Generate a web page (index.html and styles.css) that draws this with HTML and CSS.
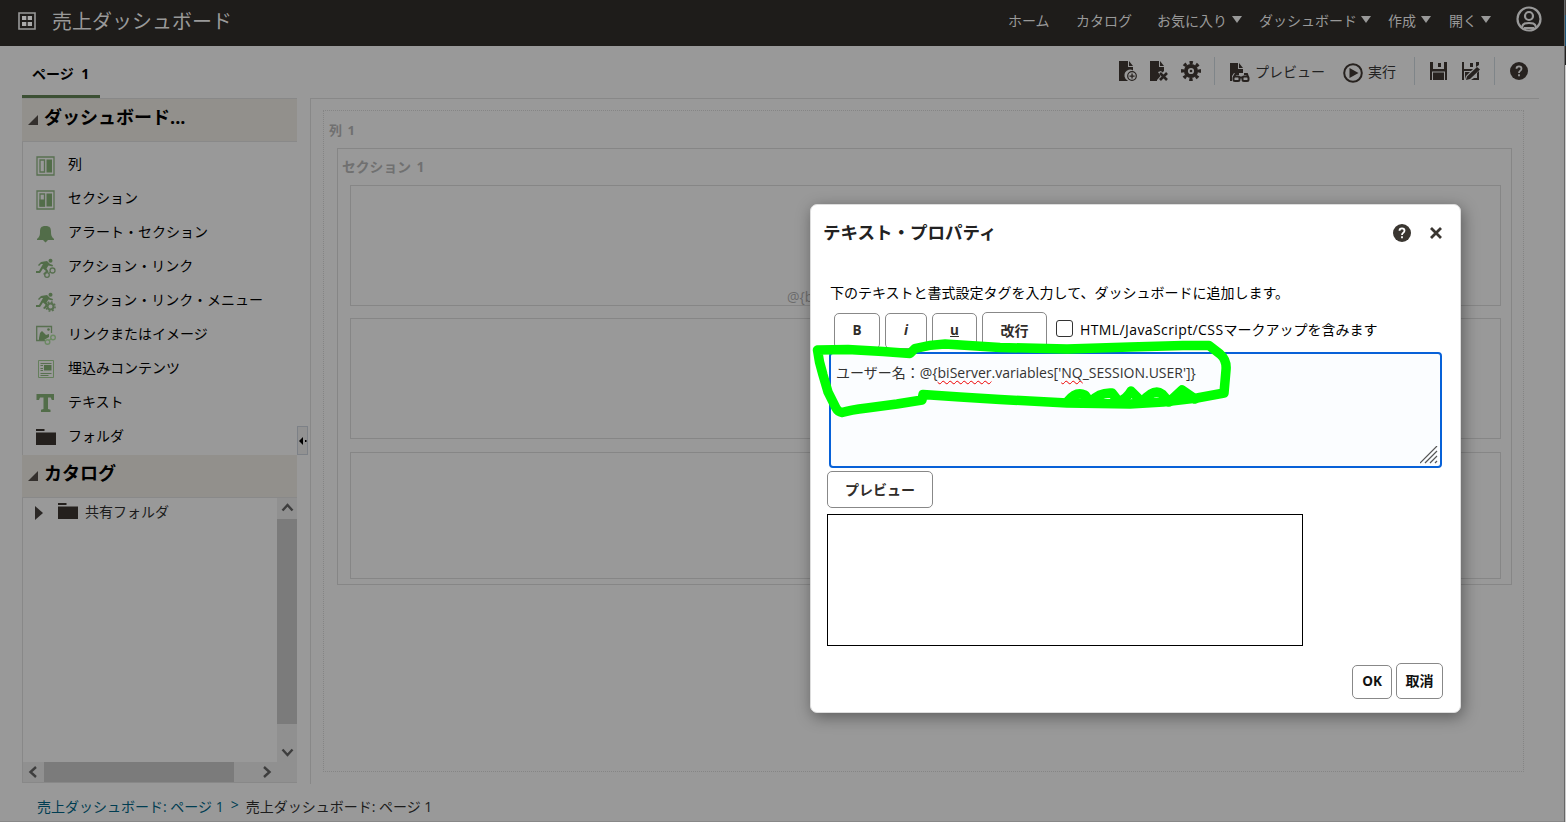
FILE: index.html
```html
<!DOCTYPE html>
<html lang="ja">
  <head>
    <meta charset="UTF-8" />
    <meta name="viewport" content="width=device-width, initial-scale=1.0" />
    <title>売上ダッシュボード</title>
    <link rel="stylesheet" href="styles.css">
  </head>
  <body>
    <div class="page">
      <header class="header">
        <svg class="logo" width="18" height="18" viewBox="0 0 18 18"><path d="M1 1h16v16H1z" fill="none" stroke="#999" stroke-width="1.600"/><path d="M4 4h4.300v4H4zM9.700 4H14v4H9.700zM4 10h4.300v4H4zM9.700 10H14v4H9.700z" fill="#aaa"/></svg>
        <h1 class="app-title">売上ダッシュボード</h1>
        <nav class="nav">
          <a class="n-home">ホーム</a>
          <a class="n-catalog">カタログ</a>
          <a class="n-fav">お気に入り<i class="caret"></i></a>
          <a class="n-dash">ダッシュボード<i class="caret"></i></a>
          <a class="n-new">作成<i class="caret"></i></a>
          <a class="n-open">開く<i class="caret"></i></a>
        </nav>
        <svg class="user" width="26" height="26" viewBox="0 0 26 26" fill="none" stroke="#999" stroke-width="2.200"><circle cx="13" cy="13" r="11.500"/><circle cx="13" cy="10" r="4"/><path d="M6 21c1-4 4-4 7-4s6 0 7 4M8 22h10"/></svg>
      </header>

      <div class="topbar">
        <div class="tab">ページ 1</div>
        <div class="tools">
          <svg class="t-add" width="20" height="22" viewBox="0 0 20 22"><path d="M0 1h9v6h5v3.500a5.500 5.500 0 0 0-6 9.500l1 1H0zM10 1l4 5h-4z"/><circle cx="13" cy="16" r="4.300" fill="none" stroke="#27221f" stroke-width="1.200"/><path d="M12.400 13.500h1.300v1.900h1.900v1.300h-1.900v1.900h-1.300v-1.900h-1.900v-1.300h1.900z"/></svg>
          <svg class="t-del" width="20" height="22" viewBox="0 0 20 22"><path d="M0 1h9v6h5v4l-1.500 1.500L11 11l-3 1 2.500 4L7 20v1H0zM10 1l4 5h-4z"/><path d="M10 13l7 7M17 13l-7 7" stroke="#27221f" stroke-width="2.600"/></svg>
          <svg class="t-gear" width="20" height="20" viewBox="0 0 20 20"><g fill="none" stroke="#27221f"><circle cx="10" cy="10" r="5.100" stroke-width="4"/><circle cx="10" cy="10" r="8.400" stroke-width="3.200" stroke-dasharray="3.300 3.297" transform="rotate(-11.500 10 10)"/></g><circle cx="10" cy="10" r="1.300"/></svg>
          <i class="sep"></i>
          <svg class="t-prev" width="20" height="21" viewBox="0 0 20 21"><path d="M0 1h8v6h5v4H4l-2 3v5H0zM9 1l4 5H9z"/><g fill="none" stroke="#27221f" stroke-width="2"><path d="M4 15l1.500-3H9M18 15l-1-3h-3M9 15.500h3"/><rect x="3.500" y="14.500" width="6" height="4.500" rx="1.500"/><rect x="12.500" y="14.500" width="6" height="4.500" rx="1.500"/></g></svg>
          <span class="tx-prev">プレビュー</span>
          <svg class="t-run" width="20" height="20" viewBox="0 0 20 20"><circle cx="10" cy="10" r="8.800" fill="none" stroke="#27221f" stroke-width="2"/><path d="M6.500 5l9 5-9 5z"/></svg>
          <span class="tx-run">実行</span>
          <i class="sep"></i>
          <svg class="t-save" width="17" height="18" viewBox="0 0 17 18"><path d="M0 0h3v7h11V0h3v18h-2V9.500H2V18H0zM3 10.500h11V18H3zM8 1h3v4H8z"/></svg>
          <svg class="t-saveas" width="19" height="18" viewBox="0 0 19 18"><path d="M0 0h2v7h9l-2 2H2v9H0zM8 1h3v4H8zM14 0h3v3l-3 2zM17 9v9H9l3-2h3v-5zM3 10h5l-4 4-1 3zM4 18l1-3.500L15 5l3 2.500L8 17z"/></svg>
          <i class="sep"></i>
          <svg class="t-help" width="18" height="18" viewBox="0 0 18 18"><circle cx="9" cy="9" r="9"/><path d="M6.500 6.800Q6.500 4.400 9 4.400t2.500 2.400Q11.500 8 10 8.900q-1 .6-1 2M9 12.300v2" fill="none" stroke="#999" stroke-width="1.800"/></svg>
        </div>
      </div>

      <main class="main">
        <aside class="sidebar">
          <h2 class="panel-head"><i class="open"></i><span class="h-dash">ダッシュボード...</span></h2>
          <ul class="items">
            <li><svg width="20" height="20" viewBox="0 0 20 20"><path d="M1 1h17v18H1zM4 4h4.500v12H4z" fill="none" stroke="#587050" stroke-width="1.300"/><path d="M10.500 3.500H16v13h-5.500z"/></svg><span>列</span></li>
            <li><svg width="20" height="20" viewBox="0 0 20 20"><path d="M1 1h17v18H1zM4 4h4.500v12H4z" fill="none" stroke="#587050" stroke-width="1.300"/><path d="M10.500 3.500H16v13h-5.500zM3.500 9.500H9v7H3.500z"/></svg><span>セクション</span></li>
            <li><svg width="20" height="20" viewBox="0 0 20 20"><path d="M9.500 2c4.500 0 5.500 2 5.500 6 0 4 1 5 3 7v1h-6l-2.500 2.500L7 16H1v-1c2-2 3-3 3-7 0-4 1-6 5.500-6z"/></svg><span>アラート・セクション</span></li>
            <li><svg width="20" height="20" viewBox="0 0 20 20"><use href="#runner"/><circle cx="16.500" cy="12.500" r="2.500" fill="none" stroke="#587050" stroke-width="1.300"/><circle cx="11" cy="17" r="2.300" fill="none" stroke="#587050" stroke-width="1.300"/><path d="M12.500 15.500l2.500-2" stroke="#587050"/></svg><span>アクション・リンク</span></li>
            <li><svg width="20" height="20" viewBox="0 0 20 20"><use href="#runner"/><circle cx="14.500" cy="14.500" r="3" fill="none" stroke="#587050" stroke-width="2"/><circle cx="14.500" cy="14.500" r="4.600" fill="none" stroke="#587050" stroke-width="1.500" stroke-dasharray="1.800 1.800"/></svg><span>アクション・リンク・メニュー</span></li>
            <li><svg width="20" height="20" viewBox="0 0 20 20"><path d="M15.500 8V1.500H.7v14H9" fill="none" stroke="#587050" stroke-width="1.300"/><path d="M3 13l1-5 2-2 4 4 3-1v3l-5 3H3z"/><circle cx="12.500" cy="4.500" r="1.300"/><g fill="none" stroke="#6d8a64" stroke-width="1.400"><circle cx="17" cy="12.500" r="2.300"/><circle cx="11.500" cy="17" r="2.300"/><path d="M13 15.500l2.500-2"/></g></svg><span>リンクまたはイメージ</span></li>
            <li><svg width="20" height="20" viewBox="0 0 20 20"><path d="M2.500 1.500h15v17h-15z" fill="none" stroke="#647f5b"/><path d="M4.500 4.500h11M4.500 6.500H7M4.500 9.500H7M4.500 11.500H7M4.500 14.500h11M4.500 16.500h8" stroke="#587050"/><path d="M8 6h7.500v5.500H8z"/></svg><span>埋込みコンテンツ</span></li>
            <li><svg width="20" height="20" viewBox="0 0 20 20"><path d="M.5 1h17.500v6h-2.200l-1-2.500H12V16l2.500.8V19H5v-2.200L7.500 16V4.500H4L3 7H.5z"/></svg><span>テキスト</span></li>
            <li><svg width="20" height="20" viewBox="0 0 20 20" class="folder"><path d="M0 2h8.500v2H0zM0 5.500h20V18H0z"/></svg><span>フォルダ</span></li>
          </ul>
          <h2 class="panel-head"><i class="open"></i><span class="h-cat">カタログ</span></h2>
          <div class="catalog">
            <div class="tree">
              <i class="closed"></i>
              <svg width="20" height="16" viewBox="0 0 20 16" class="folder"><path d="M0 0h8.500v2H0zM0 3.500h20V16H0z"/></svg>
              <span class="shared">共有フォルダ</span>
            </div>
            <div class="vscroll">
              <svg width="20" height="21" viewBox="0 0 20 21"><path d="M5.500 12.500l5-5.500 5 5.500"/></svg>
              <div class="vthumb"></div>
              <svg width="20" height="20" viewBox="0 0 20 20"><path d="M5.500 7.500l5 5.500 5-5.500"/></svg>
            </div>
            <div class="hscroll">
              <svg width="21" height="20" viewBox="0 0 21 20"><path d="M13 5l-5.500 5 5.500 5"/></svg>
              <div class="hthumb"></div>
              <svg width="20" height="20" viewBox="0 0 20 20"><path d="M7 5l5.500 5L7 15"/></svg>
            </div>
          </div>
        </aside>

        <div class="splitter"><div class="handle"><svg width="9" height="8" viewBox="0 0 9 8"><path d="M5 0v8L1 4zM7 3h1.500v2H7z"/></svg></div></div>

        <section class="canvas">
          <div class="column">
            <h3>列 1</h3>
            <div class="section">
              <h3 class="h-sec">セクション 1</h3>
              <div class="box"><span>@{b</span></div>
              <div class="box"></div>
              <div class="box last"></div>
            </div>
          </div>
        </section>
      </main>

      <footer class="crumbs">
        <a class="c-link">売上ダッシュボード: ページ 1</a><a class="gt">&gt;</a><span class="c-now">売上ダッシュボード: ページ 1</span>
      </footer>
    </div>
    <div class="edge"><i class="edge-top"></i><i class="edge-blue"></i><i class="edge-mid"></i></div>

    <div class="dialog">
      <div class="dialog-head">
        <h2>テキスト・プロパティ</h2>
        <svg width="18" height="18" viewBox="0 0 18 18"><circle cx="9" cy="9" r="9" fill="#3a3631"/><path d="M6.500 6.800Q6.500 4.400 9 4.400t2.500 2.400Q11.500 8 10 8.900q-1 .6-1 2M9 12.300v2" fill="none" stroke="#fff" stroke-width="1.800"/></svg>
        <svg class="close" width="12" height="12" viewBox="0 0 12 12"><path d="M1 1l10 10M11 1L1 11" stroke="#3a3631" stroke-width="2.800"/></svg>
      </div>
      <p class="lead">下のテキストと書式設定タグを入力して、ダッシュボードに追加します。</p>
      <div class="format">
        <button class="b">B</button>
        <button class="i">i</button>
        <button class="u">u</button>
        <button class="br">改行</button>
        <i class="check"></i>
        <label><span class="latin">HTML/JavaScript/CSS</span>マークアップを含みます</label>
      </div>
      <div class="textarea">
        <span class="typed">ユーザー名：@{<u>biServer</u>.variables['<u>NQ</u>_SESSION.USER']}</span>
        <svg class="grip" width="18" height="18" viewBox="0 0 18 18"><path d="M0 17L17 0M5 17L17 5M10 17l7-7M15 17l2-2" stroke="#555" stroke-width="1.200"/></svg>
      </div>
      <button class="preview-btn">プレビュー</button>
      <div class="preview"></div>
      <div class="actions">
        <button class="ok">OK</button>
        <button class="cancel">取消</button>
      </div>
    </div>

    <!-- hand drawn marker -->
    <svg class="marker" width="430" height="80" viewBox="808 338 430 80">
      <path d="M817.500 350L848 349.500 883 351.500 910 353.500 915 348.500Q930 344.500 945 344L1000 347.500 1067 349 1130 347 1183 345.500H1209L1220 354Q1227 360 1226 370L1224 393 1197 398 1163 402 1130 404 1067 403 1000 399.500 960 397 923 394.500 922 400 897 404 867 408Q850 410 842 412.500 838 412 836 408L828 392 823 375 819.500 362Z"/>
      <path d="M1068 401Q1076 391 1085 395L1090 402Q1100 392 1112 393L1119 402Q1128 397 1131 391L1142 402Q1154 388 1162 394L1169 402 1182 390 1195 399"/>
    </svg>

    <svg width="0" height="0" class="defs">
      <defs><g id="runner"><circle cx="14.500" cy="2.700" r="2"/><path d="M5 4l6-1 3 3 3 1-.5 1.500-4-1-2 3 2 3-4 3.500-1.500-1 3-3-3-2.500L4 15H0v-2h3l4-7H5L3 8 2 7z"/></g></defs>
    </svg>
  </body>
</html>
```
FILE: styles.css
```css
body {
  margin: 0;
  width: 1566px;
  height: 822px;
  overflow: hidden;
  display: flex;
  position: relative;
  background: #999;
  color: #000;
  font-family: "Open Sans", "Noto Sans CJK JP", sans-serif;
  font-size: 14px;
  white-space: nowrap;
}

* {
  box-sizing: border-box;
}

h1, h2, h3, p, ul {
  margin: 0;
  padding: 0;
  list-style: none;
}

svg {
  display: block;
  flex: none;
}

.page {
  width: 1564px;
  height: 822px;
  border-bottom: 1px solid #888;
}

/* header */
.header {
  height: 46px;
  display: flex;
  align-items: center;
  padding: 0 22px 4px 18px;
  background: #1e1c1a;
  color: #999;
}

.app-title {
  margin: 2px 0 0 16px;
  font-size: 20px;
  font-weight: 400;
  line-height: 40px;
}

.nav {
  display: flex;
  margin: -2px 0 0 auto;
}

.nav a {
  display: flex;
  align-items: center;
  justify-content: space-between;
}

.n-home { width: 68px; }
.n-catalog { width: 81px; }
.n-fav { width: 85px; margin-right: 17px; }
.n-dash { width: 112px; margin-right: 17px; }
.n-new { width: 43px; margin-right: 18px; }
.n-open { width: 42px; margin-right: 25px; }

.caret {
  margin-top: -2px;
  border: 5px solid transparent;
  border-top: 7px solid #999;
  border-bottom: 0;
}

.user {
  margin-top: -4px;
}

/* tab and toolbar */
.topbar {
  height: 52px;
  margin-left: 22px;
  display: flex;
}

.tab {
  width: 78px;
  border-bottom: 3px solid #3c5034;
  padding-left: 10px;
  font-weight: 700;
  line-height: 56px;
  word-spacing: 4px;
}

.tools {
  width: 411px;
  height: 50px;
  margin-left: 1019px;
  display: flex;
  align-items: center;
  fill: #27221f;
  color: #222;
}

.t-add { margin-right: 11px; }
.t-del { margin-right: 11px; }
.t-gear { margin-right: 13px; }
.t-prev { margin: 3px 5px 0 15px; }
.tx-prev { width: 88px; }
.t-run { margin: 4px 5px 0 0; }
.tx-run { width: 46px; }
.t-save { margin: 0 15px; }
.t-saveas { margin-right: 13px; }
.t-help { margin-left: 15px; }

.sep {
  width: 1px;
  height: 28px;
  background: #7f8589;
}

/* sidebar */
.main {
  height: 686px;
  margin-left: 22px;
  display: flex;
}

.sidebar {
  width: 275px;
  height: 685px;
  border-top: 1px solid #888;
  border-bottom: 1px solid #888;
}

.panel-head {
  height: 43px;
  padding-left: 6px;
  display: flex;
  align-items: center;
  background: #92908c;
  border-bottom: 1px solid #898989;
  font-size: 18px;
  font-weight: 700;
  line-height: 36px;
}

.panel-head span {
  margin: -6px 0 0 6px;
}

.open {
  border-left: 10px solid transparent;
  border-bottom: 10px solid #34302d;
}

.items {
  height: 313px;
  padding: 6px 0 0 13px;
  border-left: 1px solid #888;
}

.items li {
  height: 33.900px;
  display: flex;
  align-items: center;
  fill: #526d49;
}

.items svg {
  margin-top: 2px;
}

.items span {
  margin: -3px 0 0 12px;
}

.items .folder, .folder {
  fill: #24201d;
}

.catalog {
  height: 284px;
  display: grid;
  grid-template: 264px 20px / 254px 20px;
  background: #909090;
  border-left: 1px solid #888;
}

.tree {
  display: flex;
  height: 264px;
  background: #999;
  color: #1c1c1c;
}

.closed {
  height: 14px;
  margin: 8px 15px 0 12px;
  border: 7px solid transparent;
  border-left: 8px solid #2b2826;
  border-right: 0;
}

.tree svg {
  margin: 5px 7px 0 0;
}

.tree span {
  line-height: 28px;
}

.vscroll {
  display: flex;
  flex-direction: column;
}

.vscroll svg, .hscroll svg {
  fill: none;
  stroke: #3e3e3e;
  stroke-width: 2.400;
}

.vthumb {
  height: 205px;
  margin-bottom: 18px;
  background: #7b7b7b;
}

.hscroll {
  display: flex;
}

.hthumb {
  width: 190px;
  height: 20px;
  margin-right: 23px;
  background: #7b7b7b;
}

.splitter {
  width: 13px;
  padding-top: 328px;
}

.handle {
  width: 11px;
  height: 29px;
  display: flex;
  align-items: center;
  justify-content: center;
  background: #929292;
  border: 1px solid #7d8187;
}

/* canvas */
.canvas {
  width: 1229px;
  height: 686px;
  padding: 12px;
  border-top: 1px solid #888;
  border-left: 1px solid #888;
}

.column {
  width: 1201px;
  height: 662px;
  margin-top: -1px;
  padding: 0 0 0 13px;
  border: 1px dotted #858585;
}

.column h3 {
  height: 37px;
  margin-left: -8px;
  color: #707070;
  font-size: 13px;
  line-height: 38px;
  word-spacing: 2px;
}

.section {
  width: 1175px;
  height: 437px;
  padding-left: 12px;
  border: 1px solid #868686;
}

.section .h-sec {
  height: 36px;
  font-size: 13.800px;
  line-height: 36px;
}

.box {
  width: 1151px;
  height: 121px;
  margin-bottom: 12px;
  border: 1px solid #868686;
  color: #6c6c6c;
}

.box.last {
  height: 127px;
  margin: 13px 0 0;
}

.box span {
  display: block;
  padding: 101px 0 0 436px;
}

.crumbs {
  display: flex;
  height: 38px;
  padding: 3px 0 0 37px;
  line-height: 40px;
  color: #1c1c1c;
}

.crumbs a {
  color: #003d52;
}

.gt {
  margin: -2px 7px 0;
}

/* right window edge */
.edge {
  width: 2px;
  height: 822px;
  background: #ccc;
  border-left: 1px solid #666;
}

.edge i {
  display: block;
}

.edge-top { height: 15px; background: #444; }
.edge-blue { height: 31px; background: #1a5478; }
.edge-mid { height: 19px; background: #222; }

/* dialog */
.dialog {
  position: absolute;
  left: 810px;
  top: 204px;
  width: 651px;
  height: 509px;
  padding: 1px 17px;
  background: #fff;
  border: 1px solid #ddd;
  border-radius: 7px;
  box-shadow: 2px 4px 16px rgba(0, 0, 0, 0.4);
}

.dialog-head {
  height: 54px;
  display: flex;
  align-items: center;
  margin: 0 0 0 -5px;
}

.dialog-head h2 {
  width: 570px;
  margin-top: -4px;
  color: #222;
  font-size: 17.500px;
}

.close {
  margin-left: 19px;
}

.lead {
  margin: 20px 0 0 2px;
  height: 32px;
  line-height: 26px;
}

.format {
  height: 40px;
  padding-left: 6px;
  display: flex;
}

button {
  flex: none;
  padding: 0 0 2px;
  background: #fff;
  border: 1px solid #888;
  border-radius: 5px;
  color: #312d2a;
  font: 700 13.500px "Open Sans", "Noto Sans CJK JP", sans-serif;
}

.format button {
  height: 36px;
  margin: 1px 5px 0 0;
}

.format .b { width: 46px; }
.format .i { width: 42px; font-style: italic; }
.format .u { width: 45px; text-decoration: underline; }
.format .br { width: 65px; height: 37px; margin: 0 9px 0 0; font-size: 14px; }

.check {
  width: 17px;
  height: 17px;
  margin: 8px 7px 0 0;
  border: 1px solid #333;
  border-radius: 3px;
}

.format label {
  line-height: 36px;
}

.latin {
  letter-spacing: 0.400px;
}

.textarea {
  width: 613px;
  height: 116px;
  margin-left: 1px;
  padding: 7px 2px 2px 5px;
  display: flex;
  justify-content: space-between;
  background: #fbfdff;
  border: 2px solid #0761d8;
  border-radius: 4px;
  color: #333;
}

.textarea u {
  text-decoration: underline wavy #e00 1px;
  text-decoration-skip-ink: none;
  text-underline-offset: 2px;
}

.typed {
  line-height: 24px;
}

.grip {
  align-self: flex-end;
}

.preview-btn {
  display: block;
  width: 106px;
  height: 37px;
  margin: 3px 0 6px -1px;
  font-size: 14px;
}

.preview {
  width: 476px;
  height: 132px;
  margin-left: -1px;
  border: 1px solid #000;
}

.actions {
  display: flex;
  justify-content: flex-end;
  align-items: flex-end;
  gap: 4px;
  height: 53px;
}

.actions .ok { width: 40px; height: 34px; color: #111; }
.actions .cancel { width: 47px; height: 36px; font-size: 14px; color: #111; }

.marker {
  position: absolute;
  left: 808px;
  top: 338px;
  fill: none;
  stroke: #0f0;
  stroke-width: 9.500;
  stroke-linejoin: round;
  stroke-linecap: round;
}

.defs {
  position: absolute;
}
```
